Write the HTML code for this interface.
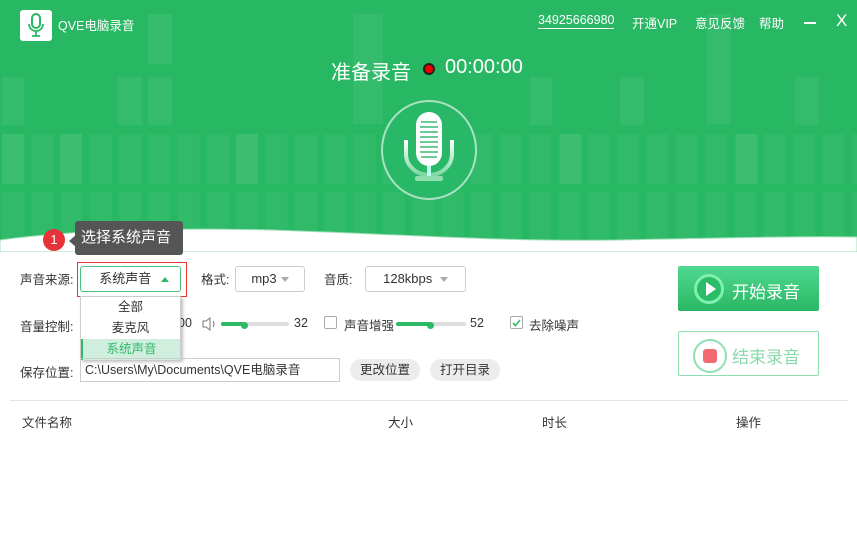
<!DOCTYPE html>
<html><head><meta charset="utf-8"><style>
*{margin:0;padding:0;box-sizing:border-box}
body{width:857px;height:549px;overflow:hidden;background:#fff;font-family:"Liberation Sans","Noto Sans CJK SC",sans-serif;font-size:12px;color:#333;position:relative}
.a{position:absolute}
.hdr{left:0;top:0;width:857px;height:245px;background:#28b763}
.tile{position:absolute;background:rgba(255,255,255,0.05)}
.w{color:#fff}
.sel{border:1px solid #ccc;border-radius:3px;background:#fff;height:26px;line-height:24px;text-align:center;font-size:13px}
.btn{background:#ececec;border-radius:11px;height:22px;line-height:22px;text-align:center;font-size:12.5px}
.tri{display:inline-block;width:0;height:0;border-left:4px solid transparent;border-right:4px solid transparent;border-top:5px solid #aaa;vertical-align:middle;margin-left:4px}
.track{height:4px;background:#ddd;border-radius:2px}
.fill{height:4px;background:#2dba66;border-radius:2px}
.knob{width:7px;height:7px;border-radius:50%;background:#2dba66;top:-1.5px}
.cb{width:13px;height:13px;border:1px solid #aaa;border-radius:2px;background:#fff}
.lb{top:0;font-size:12.5px}
</style></head><body>
<div class="a hdr">
<svg width="857" height="245" style="position:absolute;left:0;top:0">
<defs><pattern id="p" x="2" y="134" width="29.3" height="58" patternUnits="userSpaceOnUse"><rect width="22" height="50" fill="rgba(255,255,255,0.035)"/></pattern></defs>
<rect x="0" y="134" width="857" height="111" fill="url(#p)"/>
<g fill="rgba(255,255,255,0.06)">
<rect x="148" y="14" width="24" height="50"/><rect x="2" y="77" width="22" height="48"/><rect x="118" y="77" width="24" height="48"/><rect x="148" y="77" width="24" height="48"/>
<rect x="353" y="14" width="30" height="110"/><rect x="530" y="77" width="22" height="48"/><rect x="620" y="77" width="24" height="48"/><rect x="707" y="14" width="24" height="110"/><rect x="795" y="77" width="24" height="48"/>
<rect x="2" y="134" width="22" height="50"/><rect x="60" y="134" width="22" height="50"/><rect x="236" y="134" width="22" height="50"/><rect x="560" y="134" width="22" height="50"/><rect x="736" y="134" width="22" height="50"/>
</g></svg>
</div>
<svg class="a" style="left:0;top:222px" width="857" height="30"><path d="M0 18 C60 10 150 5 270 8 C400 12 500 20 620 18 C720 16 800 14 857 15 L857 30 L0 30Z" fill="#fff" stroke="#9fe0b8" stroke-width="1"/></svg>
<div class="a" style="left:20px;top:10px;width:32px;height:31px;background:#fff;border-radius:3px"></div>
<svg class="a" style="left:20px;top:10px" width="32" height="31"><rect x="12" y="4" width="8" height="14" rx="4" fill="none" stroke="#28b763" stroke-width="2"/><path d="M9 14 a7 7 0 0 0 14 0 M16 21 v5 M12 26 h8" fill="none" stroke="#28b763" stroke-width="1.8"/></svg>
<div class="a w" style="left:58px;top:15px;font-size:12.5px">QVE电脑录音</div>
<div class="a w" style="left:538px;top:13px;font-size:12.5px;border-bottom:1px solid #fff;padding-bottom:1px">34925666980</div>
<div class="a w" style="left:632px;top:13px;font-size:12.5px">开通VIP</div>
<div class="a w" style="left:695px;top:13px;font-size:12.5px">意见反馈</div>
<div class="a w" style="left:759px;top:13px;font-size:12.5px">帮助</div>
<div class="a" style="left:804px;top:22px;width:12px;height:2px;background:#fff"></div>
<div class="a w" style="left:836px;top:11px;font-size:17px">X</div>
<div class="a w" style="left:331px;top:56px;font-size:20px">准备录音</div>
<div class="a" style="left:423px;top:63px;width:12px;height:12px;border-radius:50%;background:#e00;border:2px solid #222"></div>
<div class="a w" style="left:445px;top:56px;font-size:20px">00:00:00</div>
<svg class="a" style="left:375px;top:98px" width="110" height="104">
<defs><linearGradient id="g" x1="0" y1="0" x2="0" y2="1"><stop offset="0" stop-color="#fff"/><stop offset="1" stop-color="#7fd8a4"/></linearGradient></defs>
<ellipse cx="54" cy="52" rx="47" ry="49" fill="#29b867" stroke="rgba(255,255,255,0.6)" stroke-width="2"/>
<rect x="41" y="14" width="26" height="54" rx="13" fill="#fff"/>
<g stroke="#3dbb73" stroke-width="1.5"><line x1="46" y1="24" x2="62" y2="24"/><line x1="45" y1="29" x2="63" y2="29"/><line x1="45" y1="34" x2="63" y2="34"/><line x1="45" y1="39" x2="63" y2="39"/><line x1="45" y1="44" x2="63" y2="44"/><line x1="45" y1="49" x2="63" y2="49"/><line x1="45" y1="54" x2="63" y2="54"/><line x1="46" y1="59" x2="62" y2="59"/></g>
<path d="M31 42 v14 a23 21 0 0 0 46 0 v-14" fill="none" stroke="url(#g)" stroke-width="4"/>
<rect x="52" y="68" width="4" height="10" fill="#bfe" /><rect x="40" y="78" width="28" height="5" rx="2" fill="#8fdcae"/>
</svg>
<div class="a" style="left:43px;top:229px;width:22px;height:22px;border-radius:50%;background:#e8323a;color:#fff;text-align:center;line-height:22px;font-size:13px">1</div>
<div class="a" style="left:69px;top:235px;width:0;height:0;border-top:6px solid transparent;border-bottom:6px solid transparent;border-right:7px solid #555"></div>
<div class="a" style="left:75px;top:221px;width:108px;height:34px;background:#555;border-radius:3px;color:#fff;font-size:15px;line-height:34px;padding-left:6px">选择系统声音</div>
<div class="a" style="left:20px;top:269px;font-size:12.5px">声音来源:</div>
<div class="a" style="left:77px;top:262px;width:110px;height:35px;border:1px solid #e33"></div>
<div class="a sel" style="left:80px;top:266px;width:101px;border-color:#4cc17e;color:#333">&nbsp;&nbsp;系统声音 <span style="display:inline-block;width:0;height:0;border-left:4px solid transparent;border-right:4px solid transparent;border-bottom:5px solid #2dba66;margin-left:6px;vertical-align:middle"></span></div>
<div class="a" style="left:201px;top:269px;font-size:12.5px">格式:</div>
<div class="a sel" style="left:235px;top:266px;width:70px">mp3<span class="tri"></span></div>
<div class="a" style="left:324px;top:269px;font-size:12.5px">音质:</div>
<div class="a sel" style="left:365px;top:266px;width:101px">128kbps <span class="tri"></span></div>
<div class="a" style="left:20px;top:316px;font-size:12.5px">音量控制:</div>
<div class="a" style="left:178px;top:316px;font-size:12.5px">00</div>
<svg class="a" style="left:202px;top:317px" width="16" height="14"><path d="M1 4h3l4-3v12l-4-3H1z M11 4 q2 3 0 6" fill="none" stroke="#777" stroke-width="1"/></svg>
<div class="a track" style="left:221px;top:322px;width:68px"></div><div class="a fill" style="left:221px;top:322px;width:24px"></div><div class="a knob" style="left:241px;top:322px"></div>
<div class="a" style="left:294px;top:316px;font-size:12.5px">32</div>
<div class="a cb" style="left:324px;top:316px"></div>
<div class="a" style="left:344px;top:315px;font-size:12.5px">声音增强</div>
<div class="a track" style="left:396px;top:322px;width:70px"></div><div class="a fill" style="left:396px;top:322px;width:35px"></div><div class="a knob" style="left:427px;top:322px"></div>
<div class="a" style="left:470px;top:316px;font-size:12.5px">52</div>
<div class="a cb" style="left:510px;top:316px"></div>
<svg class="a" style="left:510px;top:316px" width="13" height="13"><path d="M3 7 l2.5 2.5 L10 4" fill="none" stroke="#2dba66" stroke-width="1.6"/></svg>
<div class="a" style="left:529px;top:315px;font-size:12.5px">去除噪声</div>
<div class="a" style="left:80px;top:296px;width:101px;height:64px;background:#fff;border:1px solid #ccc;box-shadow:2px 2px 3px rgba(0,0,0,0.25)">
<div style="height:20px;line-height:20px;text-align:center;font-size:12.5px">全部</div>
<div style="height:22px;line-height:22px;text-align:center;font-size:12.5px">麦克风</div>
<div style="height:21px;line-height:21px;text-align:center;font-size:12.5px;background:#cfeedd;color:#2dba66;border-left:2px solid #2dba66">系统声音</div>
</div>
<div class="a" style="left:20px;top:362px;font-size:12.5px">保存位置:</div>
<div class="a" style="left:80px;top:358px;width:260px;height:24px;border:1px solid #ccc;line-height:22px;padding-left:4px;font-size:12.5px">C:\Users\My\Documents\QVE电脑录音</div>
<div class="a btn" style="left:350px;top:359px;width:70px">更改位置</div>
<div class="a btn" style="left:430px;top:359px;width:70px">打开目录</div>
<div class="a" style="left:678px;top:266px;width:141px;height:45px;border-radius:2px;background:linear-gradient(#4fd890,#2bb864)"></div>
<div class="a" style="left:694px;top:274px;width:30px;height:30px;border-radius:50%;border:3px solid #7ff0b0;background:#2bbc68"></div>
<div class="a" style="left:706px;top:282px;width:0;height:0;border-top:7px solid transparent;border-bottom:7px solid transparent;border-left:10px solid #fff"></div>
<div class="a w" style="left:732px;top:278px;font-size:17px">开始录音</div>
<div class="a" style="left:678px;top:331px;width:141px;height:45px;border:1px solid #8ee0b2;border-radius:2px"></div>
<div class="a" style="left:693px;top:339px;width:34px;height:34px;border-radius:50%;border:2px solid #8ee0b2"></div>
<div class="a" style="left:703px;top:349px;width:14px;height:14px;border-radius:3px;background:#f36b70"></div>
<div class="a" style="left:732px;top:343px;font-size:17px;color:#8ad8ad">结束录音</div>
<div class="a" style="left:10px;top:400px;width:838px;height:1px;background:#e4e4e4"></div>
<div class="a" style="left:22px;top:412px;font-size:12.5px">文件名称</div>
<div class="a" style="left:388px;top:412px;font-size:12.5px">大小</div>
<div class="a" style="left:542px;top:412px;font-size:12.5px">时长</div>
<div class="a" style="left:736px;top:412px;font-size:12.5px">操作</div>
</body></html>
